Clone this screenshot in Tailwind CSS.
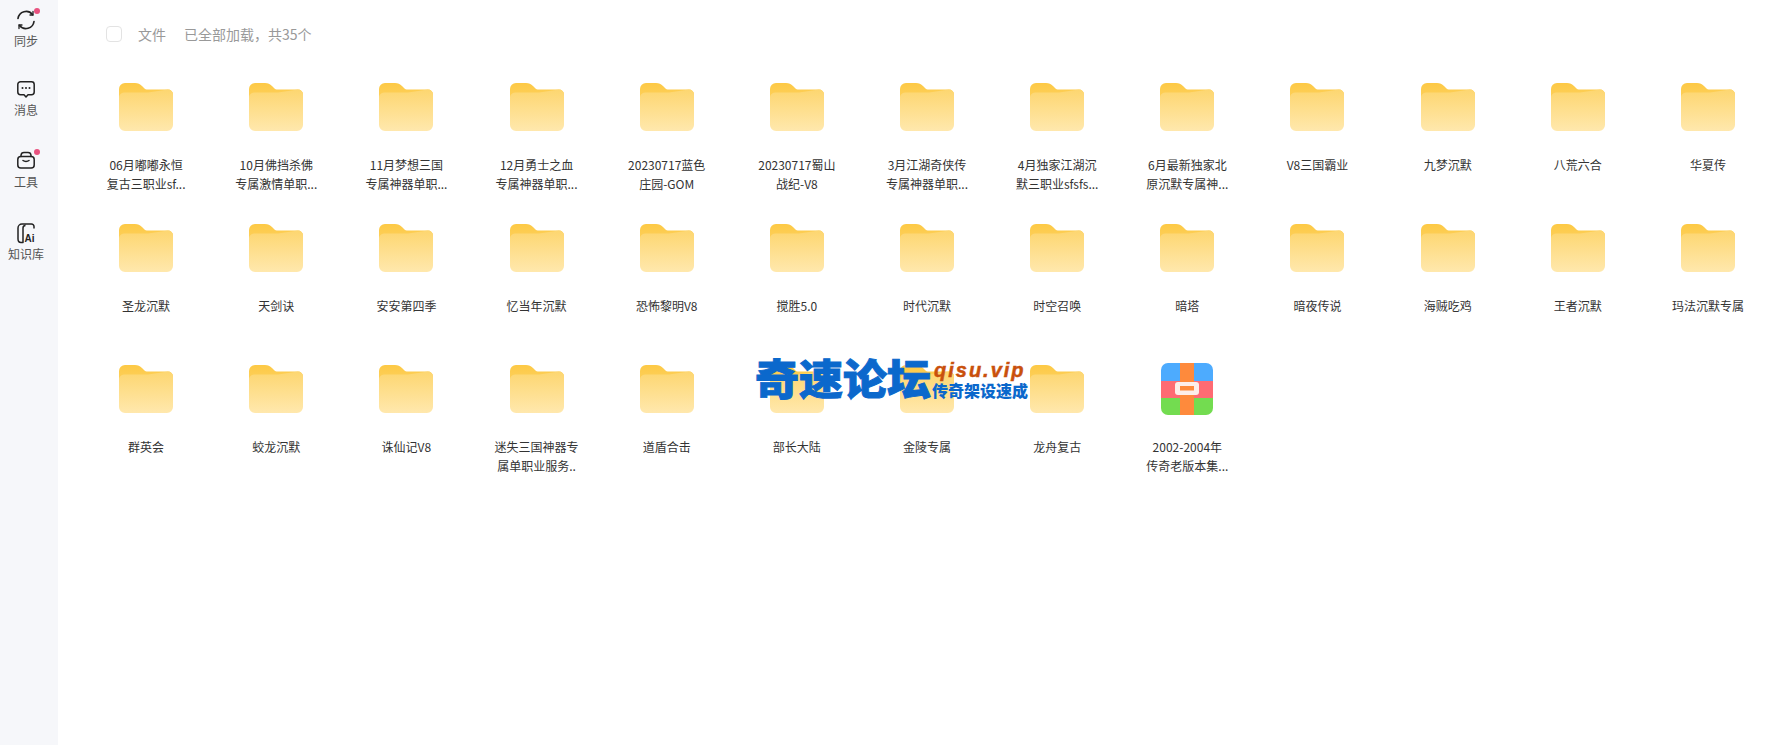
<!DOCTYPE html>
<html lang="zh">
<head>
<meta charset="utf-8">
<title>文件</title>
<script src="https://cdn.jsdelivr.net/npm/@tailwindcss/browser@4"></script>
</head>
<body class="bg-white font-['Noto_Sans_CJK_SC','Noto_Sans',sans-serif] text-[#333]">
<svg class="absolute w-0 h-0" aria-hidden="true">
  <defs>
    <linearGradient id="g1" x1="0" y1="0" x2="0" y2="1"><stop offset="0" stop-color="#fdd670"/><stop offset="1" stop-color="#ffe8ad"/></linearGradient>
    <linearGradient id="g2" x1="0" y1="0" x2="0" y2="1"><stop offset="0" stop-color="#fdc945"/><stop offset="1" stop-color="#fdd262"/></linearGradient>
    <symbol id="folder" viewBox="0 0 54 48">
      <path d="M0 6a6 6 0 0 1 6-6h10c3 0 5 1 7 3l2 2c1 1 2 1.5 4 1.500h20a5 5 0 0 1 5 5v8H0z" fill="url(#g2)"/>
      <path d="M0 15a5 5 0 0 1 5-5.500h24l20-3a5 5 0 0 1 5 5v30.500a6 6 0 0 1-6 6H6a6 6 0 0 1-6-6z" fill="url(#g1)"/>
    </symbol>
  </defs>
</svg>
<div class="flex h-[745px] w-[1783px] overflow-hidden relative">
  <aside class="w-[58px] shrink-0 h-full bg-[#f6f7fa] flex flex-col items-center pt-[10px] pr-[6px] text-[12px] leading-[16px] text-[#555]">
    <div class="relative flex flex-col items-center h-[70px] w-[24px]">
      <svg width="20" height="20" viewBox="0 0 20 20" fill="none" stroke="#222" stroke-width="1.700" stroke-linecap="round"><path d="M2 8.500A8.200 8.200 0 0 1 16.500 4.500"/><path d="M18 11.500A8.200 8.200 0 0 1 3.500 15.500"/><path d="M17 1.500V5h-3" stroke-width="1.300"/><path d="M3 18.500V15h3" stroke-width="1.300"/></svg>
      <span class="absolute right-[-2px] top-[-2px] w-[6px] h-[6px] rounded-full bg-[#e8527f]"></span>
      <span class="mt-[3px] whitespace-nowrap">同步</span>
    </div>
    <div class="relative flex flex-col items-center h-[71px] w-[24px]">
      <svg width="18" height="18" viewBox="0 0 18 18" fill="none" stroke="#222" stroke-width="1.500" stroke-linejoin="round"><path d="M3.500 1.800h11a2.700 2.700 0 0 1 2.700 2.700v7.500a2.700 2.700 0 0 1-2.700 2.700h-3.500L9 17l-2-2.300H3.500A2.700 2.700 0 0 1 .8 12V4.500A2.700 2.700 0 0 1 3.500 1.800z"/><circle cx="5.500" cy="8" r="1" fill="#222" stroke="none"/><circle cx="9" cy="8" r="1" fill="#222" stroke="none"/><circle cx="12.500" cy="8" r="1" fill="#222" stroke="none"/></svg>
      <span class="mt-[4px] whitespace-nowrap">消息</span>
    </div>
    <div class="relative flex flex-col items-center h-[72px] w-[24px]">
      <svg width="18" height="18" viewBox="0 0 18 18" fill="none" stroke="#222" stroke-width="1.500" stroke-linecap="round" stroke-linejoin="round"><path d="M4 5.500V4.200A3 3 0 0 1 7 1.500h4a3 3 0 0 1 3 2.700v1.300"/><rect x=".8" y="5.500" width="16.400" height="11.500" rx="3"/><path d="M6 9.500c1.500 1.300 4.500 1.300 6 0"/></svg>
      <span class="absolute right-[-2px] top-[-2px] w-[6px] h-[6px] rounded-full bg-[#e8527f]"></span>
      <span class="mt-[5px] whitespace-nowrap">工具</span>
    </div>
    <div class="relative flex flex-col items-center w-[24px]">
      <svg width="18" height="21" viewBox="0 0 18 21" fill="none" stroke="#222" stroke-width="1.500" stroke-linejoin="round"><path d="M17 5.500V3.500a2.500 2.500 0 0 0-2.500-2.500H5A4 4 0 0 0 1 5v11c0 2 1.200 3.500 3 3.500H6V5A2.500 2.500 0 0 1 8.500 2.500"/><text x="7.500" y="18.500" font-size="10" font-weight="700" fill="#222" stroke="none" font-family="Liberation Sans">Ai</text></svg>
      <span class="mt-[2px] whitespace-nowrap">知识库</span>
    </div>
  </aside>
  <main class="flex-1 min-w-0 relative">
    <div class="flex items-center h-[62px] pt-[6px] pl-[48px] text-[14px] text-[#999]">
      <span class="w-[16px] h-[16px] rounded-[4px] border border-[#e3e3e3] bg-white mr-[16px]"></span>
      <span class="mr-[18px]">文件</span>
      <span>已全部加载&#xFF0C;共35个</span>
    </div>
    <div class="pl-[23px] pt-[21px] grid grid-cols-[repeat(13,130.170px)] auto-rows-[141px] text-[12px] leading-[19px] text-center">
      <div><svg class="w-[54px] h-[48px] mx-auto mb-[24px]"><use href="#folder"/></svg><div class="whitespace-nowrap">06月嘟嘟永恒<br>复古三职业sf...</div></div>
      <div><svg class="w-[54px] h-[48px] mx-auto mb-[24px]"><use href="#folder"/></svg><div class="whitespace-nowrap">10月佛挡杀佛<br>专属激情单职...</div></div>
      <div><svg class="w-[54px] h-[48px] mx-auto mb-[24px]"><use href="#folder"/></svg><div class="whitespace-nowrap">11月梦想三国<br>专属神器单职...</div></div>
      <div><svg class="w-[54px] h-[48px] mx-auto mb-[24px]"><use href="#folder"/></svg><div class="whitespace-nowrap">12月勇士之血<br>专属神器单职...</div></div>
      <div><svg class="w-[54px] h-[48px] mx-auto mb-[24px]"><use href="#folder"/></svg><div class="whitespace-nowrap">20230717蓝色<br>庄园-GOM</div></div>
      <div><svg class="w-[54px] h-[48px] mx-auto mb-[24px]"><use href="#folder"/></svg><div class="whitespace-nowrap">20230717蜀山<br>战纪-V8</div></div>
      <div><svg class="w-[54px] h-[48px] mx-auto mb-[24px]"><use href="#folder"/></svg><div class="whitespace-nowrap">3月江湖奇侠传<br>专属神器单职...</div></div>
      <div><svg class="w-[54px] h-[48px] mx-auto mb-[24px]"><use href="#folder"/></svg><div class="whitespace-nowrap">4月独家江湖沉<br>默三职业sfsfs...</div></div>
      <div><svg class="w-[54px] h-[48px] mx-auto mb-[24px]"><use href="#folder"/></svg><div class="whitespace-nowrap">6月最新独家北<br>原沉默专属神...</div></div>
      <div><svg class="w-[54px] h-[48px] mx-auto mb-[24px]"><use href="#folder"/></svg><div class="whitespace-nowrap">V8三国霸业</div></div>
      <div><svg class="w-[54px] h-[48px] mx-auto mb-[24px]"><use href="#folder"/></svg><div class="whitespace-nowrap">九梦沉默</div></div>
      <div><svg class="w-[54px] h-[48px] mx-auto mb-[24px]"><use href="#folder"/></svg><div class="whitespace-nowrap">八荒六合</div></div>
      <div><svg class="w-[54px] h-[48px] mx-auto mb-[24px]"><use href="#folder"/></svg><div class="whitespace-nowrap">华夏传</div></div>

      <div><svg class="w-[54px] h-[48px] mx-auto mb-[24px]"><use href="#folder"/></svg><div class="whitespace-nowrap">圣龙沉默</div></div>
      <div><svg class="w-[54px] h-[48px] mx-auto mb-[24px]"><use href="#folder"/></svg><div class="whitespace-nowrap">天剑诀</div></div>
      <div><svg class="w-[54px] h-[48px] mx-auto mb-[24px]"><use href="#folder"/></svg><div class="whitespace-nowrap">安安第四季</div></div>
      <div><svg class="w-[54px] h-[48px] mx-auto mb-[24px]"><use href="#folder"/></svg><div class="whitespace-nowrap">忆当年沉默</div></div>
      <div><svg class="w-[54px] h-[48px] mx-auto mb-[24px]"><use href="#folder"/></svg><div class="whitespace-nowrap">恐怖黎明V8</div></div>
      <div><svg class="w-[54px] h-[48px] mx-auto mb-[24px]"><use href="#folder"/></svg><div class="whitespace-nowrap">搅胜5.0</div></div>
      <div><svg class="w-[54px] h-[48px] mx-auto mb-[24px]"><use href="#folder"/></svg><div class="whitespace-nowrap">时代沉默</div></div>
      <div><svg class="w-[54px] h-[48px] mx-auto mb-[24px]"><use href="#folder"/></svg><div class="whitespace-nowrap">时空召唤</div></div>
      <div><svg class="w-[54px] h-[48px] mx-auto mb-[24px]"><use href="#folder"/></svg><div class="whitespace-nowrap">暗塔</div></div>
      <div><svg class="w-[54px] h-[48px] mx-auto mb-[24px]"><use href="#folder"/></svg><div class="whitespace-nowrap">暗夜传说</div></div>
      <div><svg class="w-[54px] h-[48px] mx-auto mb-[24px]"><use href="#folder"/></svg><div class="whitespace-nowrap">海贼吃鸡</div></div>
      <div><svg class="w-[54px] h-[48px] mx-auto mb-[24px]"><use href="#folder"/></svg><div class="whitespace-nowrap">王者沉默</div></div>
      <div><svg class="w-[54px] h-[48px] mx-auto mb-[24px]"><use href="#folder"/></svg><div class="whitespace-nowrap">玛法沉默专属</div></div>

      <div><svg class="w-[54px] h-[48px] mx-auto mb-[24px]"><use href="#folder"/></svg><div class="whitespace-nowrap">群英会</div></div>
      <div><svg class="w-[54px] h-[48px] mx-auto mb-[24px]"><use href="#folder"/></svg><div class="whitespace-nowrap">蛟龙沉默</div></div>
      <div><svg class="w-[54px] h-[48px] mx-auto mb-[24px]"><use href="#folder"/></svg><div class="whitespace-nowrap">诛仙记V8</div></div>
      <div><svg class="w-[54px] h-[48px] mx-auto mb-[24px]"><use href="#folder"/></svg><div class="whitespace-nowrap">迷失三国神器专<br>属单职业服务..</div></div>
      <div><svg class="w-[54px] h-[48px] mx-auto mb-[24px]"><use href="#folder"/></svg><div class="whitespace-nowrap">道盾合击</div></div>
      <div><svg class="w-[54px] h-[48px] mx-auto mb-[24px]"><use href="#folder"/></svg><div class="whitespace-nowrap">部长大陆</div></div>
      <div><svg class="w-[54px] h-[48px] mx-auto mb-[24px]"><use href="#folder"/></svg><div class="whitespace-nowrap">金陵专属</div></div>
      <div><svg class="w-[54px] h-[48px] mx-auto mb-[24px]"><use href="#folder"/></svg><div class="whitespace-nowrap">龙舟复古</div></div>
      <div>
        <div class="h-[48px] mb-[24px] flex justify-center">
          <svg class="shrink-0 mt-[-2px]" width="52" height="52" viewBox="0 0 52 52">
            <defs><clipPath id="c"><rect width="52" height="52" rx="7"/></clipPath></defs>
            <g clip-path="url(#c)">
              <rect width="52" height="18" fill="#4dabfe"/>
              <rect y="18" width="52" height="17" fill="#fe6b73"/>
              <rect y="35" width="52" height="17" fill="#73dc50"/>
              <rect x="19" width="14" height="52" fill="#fe8a3c"/>
              <rect x="14" y="19" width="24" height="13" rx="3" fill="#fdeee9"/>
              <rect x="19" y="23" width="14" height="4.500" fill="#fe8a3c"/>
            </g>
          </svg>
        </div>
        <div class="whitespace-nowrap">2002-2004年<br>传奇老版本集...</div>
      </div>
    </div>
    <div class="absolute left-[697px] top-[351px] w-[280px] h-[58px] pointer-events-none">
      <span class="absolute left-0 top-[-7px] text-[44px] leading-[62px] font-black text-[#0b68cc] [-webkit-text-stroke:1px_#0b68cc] origin-bottom scale-y-[0.95] whitespace-nowrap">奇速论坛</span>
      <span class="absolute left-[179px] top-[7px] text-[20px] leading-[24px] font-['Liberation_Sans'] font-bold italic tracking-[2px] text-[#c9500c] [-webkit-text-stroke:0.5px_#c9500c] whitespace-nowrap">qisu.vip</span>
      <span class="absolute left-[177px] top-[28px] text-[16px] leading-[22px] font-black text-[#0b68cc] whitespace-nowrap">传奇架设速成</span>
    </div>
  </main>
</div>
</body>
</html>
